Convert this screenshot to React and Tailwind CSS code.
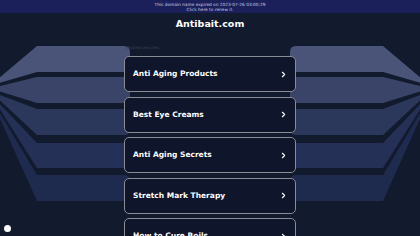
import { ChevronRight } from 'lucide-react';

const searches = [
  'Anti Aging Products',
  'Best Eye Creams',
  'Anti Aging Secrets',
  'Stretch Mark Therapy',
  'How to Cure Boils',
];

// background bands: [top, bottom, colour]
const bands = [
  [46, 72, '#4a5479'],
  [77, 103, '#3a4468'],
  [109, 135, '#2c375c'],
  [143, 168, '#253056'],
  [175, 201, '#1f2a4f'],
];

function Bands() {
  return (
    <svg className="absolute left-0 top-0" width="420" height="236" viewBox="0 0 420 236" aria-hidden="true">
      {bands.map(([t, b, c], i) => {
        const ft = 84 + i * 4;
        const fb = 85 + i * 4;
        const left = `M37 ${t} L124 ${t} Q130 ${t} 130 ${t + 6} L130 ${b - 6} Q130 ${b} 124 ${b} L37 ${b} L-8 ${fb} L-8 ${ft} Z`;
        const right = `M383 ${t} L296 ${t} Q290 ${t} 290 ${t + 6} L290 ${b - 6} Q290 ${b} 296 ${b} L383 ${b} L428 ${fb} L428 ${ft} Z`;
        return (
          <g key={i} fill={c}>
            <path d={left} />
            <path d={right} />
          </g>
        );
      })}
    </svg>
  );
}

export default function App() {
  return (
    <div className="relative w-full min-h-[236px] overflow-hidden bg-[#121a2e] font-['DejaVu_Sans',sans-serif]">
      <Bands />

      <div className="relative flex flex-col items-center">
        <div className="w-full h-[13px] bg-[#1b1f5a] pt-[1.5px] text-center text-[4.3px] leading-[5px] text-[#c9cbe0]">
          <p>This domain name expired on 2023-07-26 03:00:29</p>
          <p>Click here to renew it.</p>
        </div>

        <h1 className="mt-[6px] text-[9.5px] leading-[10px] font-bold text-white">Antibait.com</h1>

        <div className="w-[172px] mt-[16px]">
          <p className="pl-[1px] text-[4px] leading-[5px] text-[#3b4257]">Related searches</p>
          <div className="mt-[6px] flex flex-col gap-[4.5px]">
            {searches.map((s) => (
              <div
                key={s}
                className="h-[36px] flex items-center justify-between rounded-[5px] border border-[#8a8c94] bg-[#0f152a] pl-[8px] pr-[7px]"
              >
                <span className="text-[7.5px] font-bold text-white">{s}</span>
                <ChevronRight size={9} strokeWidth={3} className="text-white" />
              </div>
            ))}
          </div>
        </div>
      </div>

      <div className="absolute left-[3.5px] top-[224.5px] w-[7px] h-[7px] rounded-full bg-white" />
    </div>
  );
}
